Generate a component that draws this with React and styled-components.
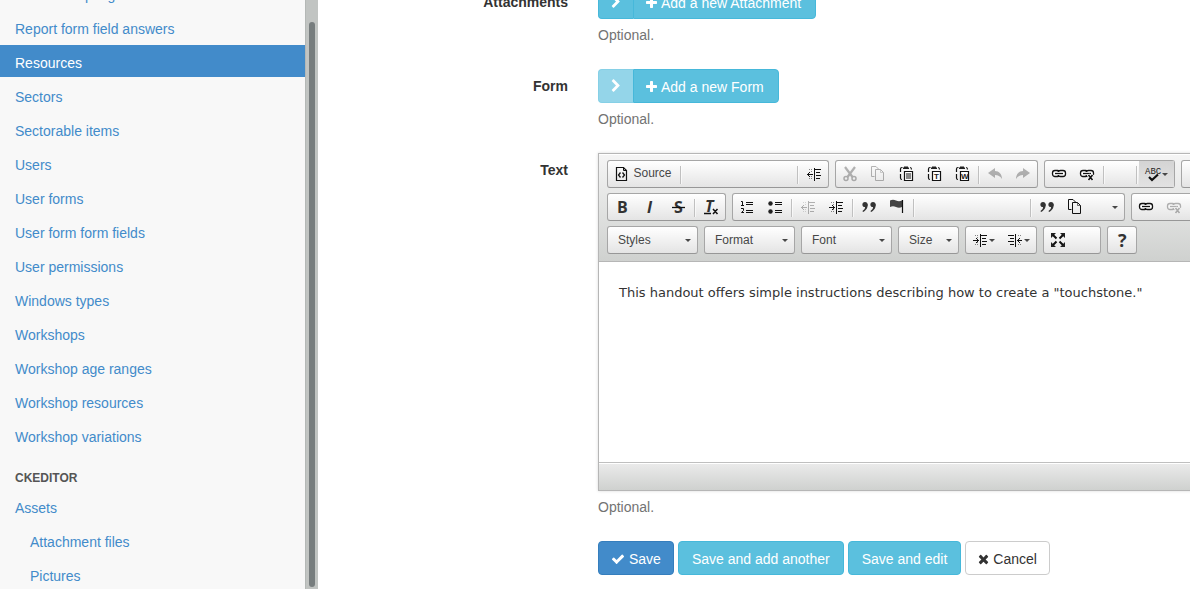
import React from "react";
import styled, { createGlobalStyle, css } from "styled-components";

const sans = '"Liberation Sans", Arial, sans-serif';

const GlobalStyle = createGlobalStyle`
  *, *::before, *::after { box-sizing: border-box; }
  body {
    margin: 0;
    background: #fff;
    color: #333;
    font: 14px/20px ${sans};
    overflow: hidden;
  }
  button, select, textarea { font: inherit; margin: 0; }
`;

const Page = styled.div`
  display: flex;
  height: 100vh;
  overflow: hidden;
`;

/* ---------- Sidebar ---------- */

const Sidebar = styled.aside`
  flex: 0 0 318px;
  display: flex;
  background: #f8f8f8;
  overflow: hidden;
`;

const Nav = styled.nav`
  flex: 1;
  margin-top: -23px;
`;

const NavList = styled.ul`
  list-style: none;
  margin: 0;
  padding: 0;
  display: flex;
  flex-direction: column;
  gap: 2px;
`;

const NavLink = styled.a`
  display: block;
  padding: 8px 15px 4px ${(p) => (p.$nested ? 30 : 15)}px;
  color: ${(p) => (p.$active ? "#fff" : "#428bca")};
  background: ${(p) => (p.$active ? "#428bca" : "transparent")};
  text-decoration: none;
`;

const NavHeading = styled.h2`
  margin: 0;
  padding: 17px 15px 2px;
  font-size: 12px;
  line-height: 20px;
  font-weight: bold;
  color: #555;
  text-transform: uppercase;
`;

const Track = styled.div`
  flex: 0 0 13px;
  display: flex;
  padding: 22px 3px 2px;
  background: #c1c4c2;
  border-left: 1px solid #b4b8b6;
`;

const Thumb = styled.div`
  flex: 1;
  border-radius: 3px;
  background: #777d7e;
`;

/* ---------- Form ---------- */

const Main = styled.main`
  flex: 1;
  min-width: 0;
  overflow: hidden;
`;

const Form = styled.form`
  display: flex;
  flex-direction: column;
  gap: 15px;
  margin-top: -15px;
`;

const Field = styled.div`
  display: grid;
  grid-template-columns: 250px minmax(0, 1fr);
  column-gap: 30px;
`;

const Label = styled.label`
  padding-top: 7px;
  text-align: right;
  font-weight: bold;
`;

const Control = styled.div`
  grid-column: 2;
`;

const Help = styled.p`
  margin: 6px 0 9px;
  color: #737373;
`;

const tones = {
  primary: css`color: #fff; background: #428bca; border-color: #357ebd;`,
  info: css`color: #fff; background: #5bc0de; border-color: #46b8da;`,
  plain: css`color: #333; background: #fff; border-color: #ccc;`,
};

const Button = styled.button`
  display: inline-flex;
  align-items: center;
  gap: 4px;
  height: 34px;
  padding: 7px ${(p) => (p.$textOnly ? 13 : 12)}px 5px;
  border: 1px solid;
  border-radius: 4px;
  line-height: 20px;
  white-space: nowrap;
  ${(p) => tones[p.$tone]}
  &:disabled { opacity: 0.65; }
`;

const ButtonGroup = styled.div`
  display: flex;
  ${Button}:first-child { width: 35px; justify-content: center; padding: 6px 0; border-right: 0; border-radius: 4px 0 0 4px; }
  ${Button}:last-child { padding-right: 14px; border-radius: 0 4px 4px 0; }
`;

const Actions = styled.div`
  grid-column: 2;
  display: flex;
  gap: 4px;
`;

/* ---------- Rich text editor ---------- */

const Editor = styled.div`
  min-width: 900px;
  border: 1px solid #b6b6b6;
  box-shadow: 0 0 3px rgba(0, 0, 0, 0.15);
`;

const Toolbar = styled.div`
  display: flex;
  flex-direction: column;
  gap: 5px;
  padding: 6px 8px 7px;
  border-bottom: 1px solid #b6b6b6;
  background: linear-gradient(#f5f5f5, #cfd1cf);
  box-shadow: 0 1px 0 #fff inset;
`;

const ToolRow = styled.div`
  display: flex;
  gap: 6px;
`;

const ToolGroup = styled.div`
  display: flex;
  flex: none;
  height: 28px;
  border: 1px solid #a6a6a6;
  border-bottom-color: #979797;
  border-radius: 3px;
  background: linear-gradient(#fff, #e4e4e4);
`;

const ToolButton = styled.button`
  display: flex;
  align-items: center;
  gap: ${(p) => (p.$caption ? 3 : 1)}px;
  padding: 0 6px;
  border: 0;
  color: #474747;
  font-size: 12px;
  line-height: 18px;
  background: ${(p) => (p.$on ? "linear-gradient(#d4d4d4, #e2e2e2)" : "transparent")};
  &:disabled svg { opacity: 0.3; }
`;

const Caption = styled.span`
  min-width: 39px;
  padding-bottom: 2px;
`;

const Blank = styled.span`
  width: ${(p) => p.$slots * 28}px;
`;

const Separator = styled.span`
  width: 1px;
  height: 18px;
  margin: 5px 2px 0;
  background: #c0c0c0;
  box-shadow: 1px 0 0 rgba(255, 255, 255, 0.6);
`;

const Arrow = styled.span`
  border: 3px solid transparent;
  border-top-color: #474747;
  border-bottom-width: 0;
`;

const Combo = styled.div`
  position: relative;
  flex: none;
  width: ${(p) => (p.$short ? 61 : 91)}px;
  height: 28px;
  border: 1px solid #a6a6a6;
  border-bottom-color: #979797;
  border-radius: 3px;
  background: linear-gradient(#fff, #e4e4e4);
  select {
    width: 100%;
    height: 26px;
    padding: 0 10px;
    border: 0;
    appearance: none;
    background: transparent;
    color: #474747;
    font-size: 12px;
  }
  ${Arrow} {
    position: absolute;
    right: 6px;
    top: 12px;
    pointer-events: none;
  }
`;

const TextArea = styled.textarea`
  display: block;
  width: 100%;
  height: 200px;
  padding: 20px;
  border: 0;
  resize: none;
  outline: 0;
  color: #333;
  background: #fff;
  font: 13px/21px "DejaVu Sans", sans-serif;
`;

const StatusBar = styled.div`
  height: 28px;
  border-top: 1px solid #bfbfbf;
  background: linear-gradient(#ebebeb, #cfd1cf);
  box-shadow: 0 1px 0 #fff inset;
`;

/* ---------- Icons ---------- */

const glyphs = {
  check: [14, "0 0 1792 1792", "M1671 566q0 40-28 68l-724 724-136 136q-28 28-68 28t-68-28l-136-136-362-362q-28-28-28-68t28-68l136-136q28-28 68-28t68 28l294 295 656-657q28-28 68-28t68 28l136 136q28 28 28 68z"],
  times: [11, "192 0 1408 1792", "M1490 1322q0 40-28 68l-136 136q-28 28-68 28t-68-28l-294-294-294 294q-28 28-68 28t-68-28l-136-136q-28-28-28-68t28-68l294-294-294-294q-28-28-28-68t28-68l136-136q28-28 68-28t68 28l294 294 294-294q28-28 68-28t68 28l136 136q28 28 28 68t-28 68l-294 294 294 294q28 28 28 68z"],
  plus: [11, "192 0 1408 1792", "M1600 736v192q0 40-28 68t-68 28h-416v416q0 40-28 68t-68 28h-192q-40 0-68-28t-28-68v-416h-416q-40 0-68-28t-28-68v-192q0-40 28-68t68-28h416v-416q0-40 28-68t68-28h192q40 0 68 28t28 68v416h416q40 0 68 28t28 68z"],
  chevron: [14, "0 0 1792 1792", "M1363 877l-742 742q-19 19-45 19t-45-19l-166-166q-19-19-19-45t19-45l531-531-531-531q-19-19-19-45t19-45l166-166q19-19 45-19t45 19l742 742q19 19 19 45t-19 45z"],
};

function Glyph({ name }) {
  const [width, viewBox, d] = glyphs[name];
  return (
    <svg width={width} height="14" viewBox={viewBox} fill="currentColor" aria-hidden="true">
      <path d={d} />
    </svg>
  );
}

const Pic = styled.svg.attrs({ width: 16, height: 16, viewBox: "0 0 16 16", "aria-hidden": true })`
  display: block;
  overflow: visible;
  fill: none;
  stroke: #111;
`;

const Letter = styled.text`
  font: ${(p) => (p.$italic ? "italic" : "normal")} bold ${(p) => p.$size || 16}px "Open Sans", sans-serif;
  fill: #333;
  stroke: none;
`;

const SmallLetters = styled.text`
  font: ${(p) => (p.$mono ? '9px "Liberation Mono", monospace' : 'bold 8px "Liberation Sans", sans-serif')};
  fill: #222;
  stroke: none;
`;

const crisp = { shapeRendering: "crispEdges" };
const pages = (
  <>
    <path d="M4.500 10.500H1.500V0.500H6L8.500 3" />
    <path d="M5.500 3.500H10.500L13.500 6.500V14.500H5.500Z" />
    <path d="M10.500 3.500V6.500H13.500" strokeWidth=".6" />
  </>
);
const chain = (
  <>
    <rect x="1.500" y="4.500" width="7.500" height="6" rx="2.500" fill="#fff" strokeWidth="1.300" />
    <rect x="7" y="4.500" width="7.500" height="6" rx="2.500" fill="#fff" strokeWidth="1.300" />
    <path d="M4 7.500H12" stroke="#fff" strokeWidth="3" />
    <path d="M4 7.500H12" strokeWidth="1.300" />
  </>
);
const clipboard = (
  <>
    <path d="M4.500 1.500H4Q2.500 1.500 2.500 3V6M2.500 8V12Q2.500 13.500 4 13.500M12 1.500Q13.500 1.500 13.500 3.500" strokeWidth="1.200" />
    <path d="M6 0.500H10V1.500H11V3H5V1.500H6Z" fill="#222" stroke="none" />
    <path d="M6.500 5.500H14.500V14.500H6.500Z" fill="#fff" strokeWidth="1.200" />
  </>
);
const textLines = <path d="M9 3.500H15M10 6.500H14M10 9.500H15M10 12.500H14M8.500 2V15" />;
const dots = <path d="M3 3.500H4M5 3.500H6M3 12.500H4M5 12.500H6M5 5.500H6M5 10.500H6" opacity=".5" />;
const quotes = (
  <g fill="#333" stroke="none">
    <circle cx="4" cy="5.500" r="2.600" /><path d="M6.600 5C7 9 5 11.500 2 13L1.500 12Q4.500 10 4.300 7Z" />
    <circle cx="12" cy="5.500" r="2.600" /><path d="M14.600 5C15 9 13 11.500 10 13L9.500 12Q12.500 10 12.300 7Z" />
  </g>
);

const pics = {
  source: <><path d="M2.500 1.500H9.500L12.500 4.500V14.500H2.500Z" strokeWidth="1.200" /><path d="M9.500 1.500V4.500H12.500" /><path d="M6.500 6.500L4.500 9L6.500 11.500M8.500 6.500L10.500 9L8.500 11.500" strokeWidth="1.300" /></>,
  outdent: <g style={crisp}>{textLines}{dots}<path d="M1 8.500H7M2 7.500H3M2 9.500H3M3 6.500H4M3 10.500H4" /></g>,
  indent: <g style={crisp}>{textLines}{dots}<path d="M1 8.500H7M5 7.500H6M5 9.500H6M4 6.500H5M4 10.500H5" /></g>,
  rtl: <g style={crisp}><path d="M1 3.500H7M3 6.500H7M1 9.500H7M3 12.500H7M8.500 2V15M10 8.500H15M11 7.500H12M11 9.500H12M12 6.500H13M12 10.500H13" /><path d="M11 3.500H12M13 3.500H14M11 12.500H12M13 12.500H14" opacity=".5" /></g>,
  cut: <><path d="M3 1L10.500 11M13 1L5.500 11" strokeWidth="2.200" /><circle cx="4" cy="12.500" r="2" strokeWidth="1.500" /><circle cx="12" cy="12.500" r="2" strokeWidth="1.500" /></>,
  copy: pages,
  paste: <>{clipboard}<path d="M8 8H13M8 10H13M8 12H13" /></>,
  pasteText: <>{clipboard}<SmallLetters x="8" y="13">T</SmallLetters></>,
  pasteWord: <>{clipboard}<SmallLetters x="7" y="13">W</SmallLetters></>,
  undo: <path d="M1 7L8 2V5C12 5 15 8 15 13C13 10 11 9 8 9V12Z" fill="#111" stroke="none" />,
  redo: <path d="M15 7L8 2V5C4 5 1 8 1 13C3 10 5 9 8 9V12Z" fill="#111" stroke="none" />,
  link: chain,
  unlink: <>{chain}<path d="M9 8.500L14 14.500M14 8.500L9 14.500" stroke="#f4f4f4" strokeWidth="3.500" /><path d="M9.500 9L13.500 14M13.500 9L9.500 14" strokeWidth="1.600" /></>,
  spell: <><SmallLetters x="0" y="8" $mono>ABC</SmallLetters><path d="M4 11L7 14L13 8.500" strokeWidth="2.200" /></>,
  bold: <Letter x="3" y="14">B</Letter>,
  italic: <Letter x="5" y="14" $italic>I</Letter>,
  strike: <><Letter x="4" y="14">S</Letter><path d="M2 8.500H15" strokeWidth="1.300" /></>,
  clear: <><Letter x="2" y="13" $italic>T</Letter><path d="M1 14.500H8M10 10L14.500 15M14.500 10L10 15" strokeWidth="1.500" /></>,
  numbers: <><path d="M7 3.500H14M7 5.500H14M7 11.500H14M7 13.500H14" style={crisp} /><path d="M2 2.500H3.500V6.500M2 6.500H5M2 9.500H4.500V11.500L2.500 13.500H5" /></>,
  bullets: <><path d="M8 3.500H15M8 5.500H15M8 11.500H15M8 13.500H15" style={crisp} /><g fill="#222" stroke="none"><circle cx="3.500" cy="4.500" r="2.200" /><circle cx="3.500" cy="12.500" r="2.200" /></g></>,
  quote: quotes,
  flag: <><path d="M1 1.500Q4 0 7 1.500T13 1.500V8Q10 9.500 7 8T1 8Z" fill="#444" stroke="none" /><path d="M13.500 1V14" strokeWidth="1.200" /></>,
  maximize: <><g fill="#222" stroke="none"><path d="M1 1H6L1 6ZM15 1V6L10 1ZM1 15V10L6 15ZM15 15H10L15 10Z" /></g><path d="M3 3L6.500 6.500M13 3L9.500 6.500M3 13L6.500 9.500M13 13L9.500 9.500" strokeWidth="2" /></>,
  help: <Letter x="4" y="15" $size={18}>?</Letter>,
};

function Tool({ icon, label, caption, menu, ...rest }) {
  return (
    <ToolButton type="button" aria-label={label} $caption={!!caption} {...rest}>
      {icon ? <Pic>{pics[icon]}</Pic> : <Pic />}
      {caption && <Caption>{caption}</Caption>}
      {menu && <Arrow />}
    </ToolButton>
  );
}

function Picker({ name, short }) {
  return (
    <Combo $short={short}>
      <select aria-label={name}><option>{name}</option></select>
      <Arrow />
    </Combo>
  );
}

const links = [
  { name: "Workshop logs", nested: true },
  { name: "Report form field answers" },
  { name: "Resources", active: true },
  ...["Sectors", "Sectorable items", "Users", "User forms", "User form form fields", "User permissions", "Windows types", "Workshops", "Workshop age ranges", "Workshop resources", "Workshop variations"].map((name) => ({ name })),
];
const assetLinks = [{ name: "Assets" }, { name: "Attachment files", nested: true }, { name: "Pictures", nested: true }];

function Links({ items }) {
  return (
    <NavList>
      {items.map((l) => (
        <li key={l.name}>
          <NavLink href="#" $nested={l.nested} $active={l.active}>{l.name}</NavLink>
        </li>
      ))}
    </NavList>
  );
}

function Association({ name, disabled }) {
  const id = `add-${name.toLowerCase()}`;
  return (
    <Control>
      <ButtonGroup>
        <Button type="button" $tone="info" disabled={disabled} aria-label="Toggle"><Glyph name="chevron" /></Button>
        <Button type="button" id={id} $tone="info"><Glyph name="plus" />Add a new {name}</Button>
      </ButtonGroup>
      <Help>Optional.</Help>
    </Control>
  );
}

export default function App() {
  return (
    <Page>
      <GlobalStyle />
      <Sidebar>
        <Nav>
          <Links items={links} />
          <NavHeading>Ckeditor</NavHeading>
          <Links items={assetLinks} />
        </Nav>
        <Track><Thumb /></Track>
      </Sidebar>
      <Main>
        <Form>
          <Field>
            <Label htmlFor="add-attachment">Attachments</Label>
            <Association name="Attachment" />
          </Field>
          <Field>
            <Label htmlFor="add-form">Form</Label>
            <Association name="Form" disabled />
          </Field>
          <Field>
            <Label htmlFor="text">Text</Label>
            <Control>
              <Editor>
                <Toolbar>
                  <ToolRow>
                    <ToolGroup>
                      <Tool icon="source" caption="Source" />
                      <Separator /><Blank $slots={4} /><Separator />
                      <Tool icon="outdent" label="Block direction" />
                    </ToolGroup>
                    <ToolGroup>
                      <Tool icon="cut" label="Cut" disabled />
                      <Tool icon="copy" label="Copy" disabled />
                      <Tool icon="paste" label="Paste" />
                      <Tool icon="pasteText" label="Paste as plain text" />
                      <Tool icon="pasteWord" label="Paste from Word" />
                      <Separator />
                      <Tool icon="undo" label="Undo" disabled />
                      <Tool icon="redo" label="Redo" disabled />
                    </ToolGroup>
                    <ToolGroup>
                      <Tool icon="link" label="Link" />
                      <Tool icon="unlink" label="Unlink" />
                      <Separator /><Blank $slots={1} /><Separator />
                      <Tool icon="spell" label="Spell check" menu $on />
                    </ToolGroup>
                    <ToolGroup><Blank $slots={3} /></ToolGroup>
                  </ToolRow>
                  <ToolRow>
                    <ToolGroup>
                      <Tool icon="bold" label="Bold" />
                      <Tool icon="italic" label="Italic" />
                      <Tool icon="strike" label="Strikethrough" />
                      <Separator />
                      <Tool icon="clear" label="Remove format" />
                    </ToolGroup>
                    <ToolGroup>
                      <Tool icon="numbers" label="Numbered list" />
                      <Tool icon="bullets" label="Bulleted list" />
                      <Separator />
                      <Tool icon="outdent" label="Decrease indent" disabled />
                      <Tool icon="indent" label="Increase indent" />
                      <Separator />
                      <Tool icon="quote" label="Block quote" />
                      <Tool icon="flag" label="Anchor" />
                      <Separator /><Blank $slots={4} /><Separator />
                      <Tool icon="quote" label="Quote" />
                      <Tool icon="copy" label="Templates" />
                      <Tool label="Language" menu />
                    </ToolGroup>
                    <ToolGroup>
                      <Tool icon="link" label="Link" />
                      <Tool icon="unlink" label="Unlink" disabled />
                      <Blank $slots={1} />
                    </ToolGroup>
                  </ToolRow>
                  <ToolRow>
                    <Picker name="Styles" />
                    <Picker name="Format" />
                    <Picker name="Font" />
                    <Picker name="Size" short />
                    <ToolGroup>
                      <Tool icon="indent" label="Text direction left" menu />
                      <Tool icon="rtl" label="Text direction right" menu />
                    </ToolGroup>
                    <ToolGroup>
                      <Tool icon="maximize" label="Maximize" />
                      <Blank $slots={1} />
                    </ToolGroup>
                    <ToolGroup><Tool icon="help" label="Help" /></ToolGroup>
                  </ToolRow>
                </Toolbar>
                <TextArea id="text" spellCheck={false} defaultValue={'This handout offers simple instructions describing how to create a "touchstone."'} />
                <StatusBar />
              </Editor>
              <Help>Optional.</Help>
            </Control>
          </Field>
          <Field>
            <Actions>
              <Button type="submit" $tone="primary"><Glyph name="check" />Save</Button>
              <Button type="submit" $tone="info" $textOnly>Save and add another</Button>
              <Button type="submit" $tone="info" $textOnly>Save and edit</Button>
              <Button type="button" $tone="plain"><Glyph name="times" />Cancel</Button>
            </Actions>
          </Field>
        </Form>
      </Main>
    </Page>
  );
}
